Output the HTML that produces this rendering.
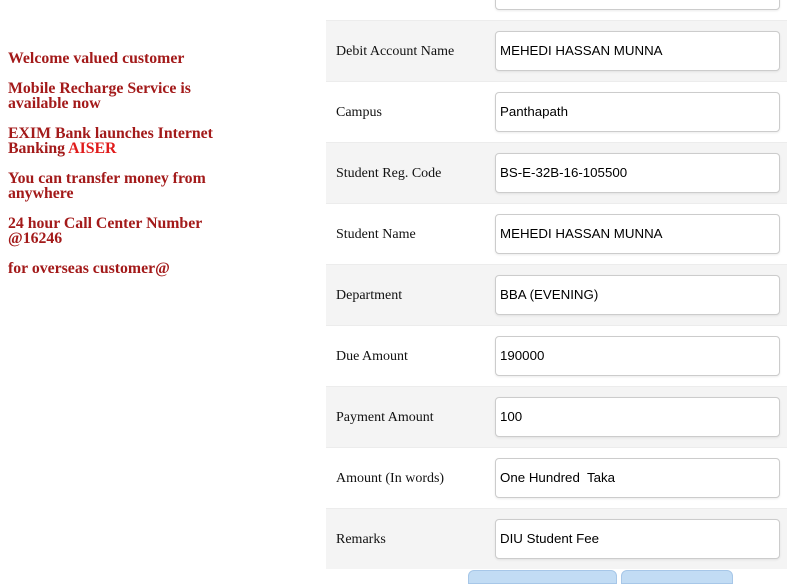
<!DOCTYPE html>
<html><head><style>
body{margin:0;width:787px;height:576px;overflow:hidden;background:#fff;position:relative;font-family:"Liberation Serif",serif}
.news{position:absolute;left:8px;top:51px;width:240px;color:#a31a1a;font-weight:bold;font-size:15.8px;line-height:15px}
.news p{margin:0 0 15px}
.row{position:absolute;left:326px;width:461px;height:60px;border-top:1px solid #ececec}
.g{background:#f4f4f4}
.lbl{position:absolute;left:10px;top:23px;font-size:14px;color:#111}
.inp{position:absolute;left:169px;top:10px;background:#fff;border:1px solid #ccc;border-radius:4px;box-shadow:0 1px 2px rgba(0,0,0,.08);font-family:"Liberation Sans",sans-serif;font-size:13.3px;padding-left:4px;box-sizing:border-box;width:285px;height:40px;line-height:38px}
.btn{position:absolute;top:570px;height:12px;background:#c2dcf4;border:1px solid #a7c7e8;border-radius:6px 6px 0 0}
</style></head><body>
<div class="news">
<p>Welcome valued customer</p>
<p>Mobile Recharge Service is available now</p>
<p>EXIM Bank launches Internet Banking <span style="color:#e01b1b">AISER</span></p>
<p>You can transfer money from anywhere</p>
<p>24 hour Call Center Number @16246</p>
<p>for overseas customer@</p>
</div>
<div class="inp" style="left:495px;top:-30px"></div>
<div class="row g" style="top:20px"><div class="lbl">Debit Account Name</div><div class="inp">MEHEDI HASSAN MUNNA</div></div>
<div class="row" style="top:81px"><div class="lbl">Campus</div><div class="inp">Panthapath</div></div>
<div class="row g" style="top:142px"><div class="lbl">Student Reg. Code</div><div class="inp">BS-E-32B-16-105500</div></div>
<div class="row" style="top:203px"><div class="lbl">Student Name</div><div class="inp">MEHEDI HASSAN MUNNA</div></div>
<div class="row g" style="top:264px"><div class="lbl">Department</div><div class="inp">BBA (EVENING)</div></div>
<div class="row" style="top:325px"><div class="lbl">Due Amount</div><div class="inp">190000</div></div>
<div class="row g" style="top:386px"><div class="lbl">Payment Amount</div><div class="inp">100</div></div>
<div class="row" style="top:447px"><div class="lbl">Amount (In words)</div><div class="inp">One Hundred&nbsp; Taka</div></div>
<div class="row g" style="top:508px"><div class="lbl">Remarks</div><div class="inp">DIU Student Fee</div></div>
<div class="btn" style="left:468px;width:147px"></div>
<div class="btn" style="left:621px;width:110px"></div>
</body></html>
